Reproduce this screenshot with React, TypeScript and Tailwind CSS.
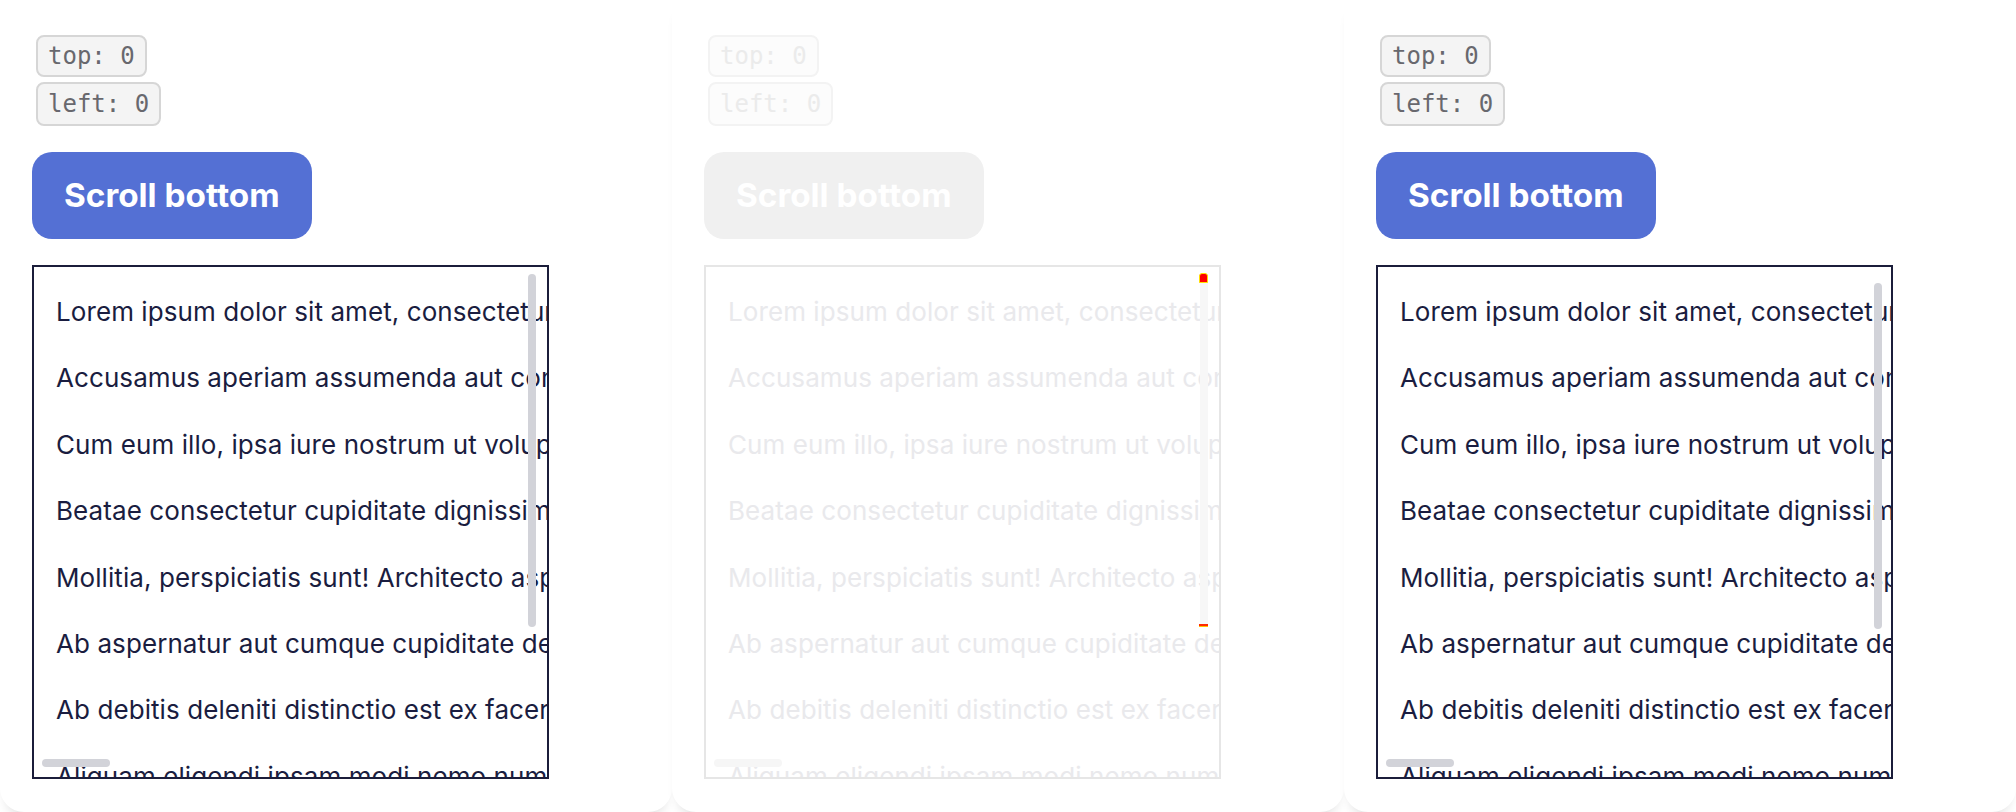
import React from "react";

const lines = [
  "Lorem ipsum dolor sit amet, consectetur adipisicing elit. Quisquam, voluptatum.",
  "Accusamus aperiam assumenda aut consequatur deserunt dolore eaque.",
  "Cum eum illo, ipsa iure nostrum ut voluptas voluptatem quae.",
  "Beatae consectetur cupiditate dignissimos doloremque eius est.",
  "Mollitia, perspiciatis sunt! Architecto aspernatur debitis dolorum.",
  "Ab aspernatur aut cumque cupiditate delectus deserunt dicta.",
  "Ab debitis deleniti distinctio est ex facere fugiat illum.",
  "Aliquam eligendi ipsam modi nemo numquam officiis quas.",
];

const sans = "font-['Inter','Noto_Sans',sans-serif]";

interface PanelProps {
  variant: "normal" | "faded" | "third";
}

const Panel = ({ variant }: PanelProps) => {
  const faded = variant === "faded";

  const badge = faded
    ? "bg-[#fcfcfc] border-[#f3f3f3] text-[#ebebeb]"
    : "bg-[#f4f4f4] border-[#d6d6d6] text-[#68686e]";
  const button = faded ? "bg-[#f0f0f0] text-white" : "bg-[#5470d4] text-white";
  const box = faded ? "border-[#e6e6e6]" : "border-[#1b1d3a]";
  const text = faded ? "text-[#e9e9ec]" : "text-[#1a1d40]";
  const thumb = faded ? "bg-[#f7f7f7]" : "bg-[#d2d3d9]";
  const hThumb = faded ? "bg-[#f6f6f6]" : "bg-[#d2d3d9]";
  const vThumbPos =
    variant === "third"
      ? "top-[16px] h-[346px] right-[9px]"
      : "top-[7px] h-[353px] right-[11px]";

  return (
    <div className="w-[672px] h-[812px] shrink-0 bg-white rounded-b-[24px] shadow-[0_10px_12px_-7px_rgba(0,0,0,0.14)] px-[32px] pt-[35px]">
      <div className="flex flex-col items-start gap-[5px] ml-[4px] font-['DejaVu_Sans_Mono',monospace]">
        <span className={`h-[42px] flex items-center px-[10px] border-2 rounded-[8px] text-[24px] ${badge}`}>
          top: 0
        </span>
        <span className={`h-[44px] flex items-center px-[10px] border-2 rounded-[8px] text-[24px] ${badge}`}>
          left: 0
        </span>
      </div>

      <button
        className={`mt-[26px] h-[87px] px-[32px] rounded-[20px] text-[33.3px] font-bold ${sans} ${button}`}
      >
        Scroll bottom
      </button>

      <div className={`relative mt-[26px] w-[517px] h-[514px] border-2 overflow-hidden ${box}`}>
        <div className={`px-[22px] pt-[24px] ${sans} ${text}`}>
          {lines.map((line) => (
            <p
              key={line}
              className="whitespace-nowrap text-[26px] tracking-[0.08px] leading-[42px] mb-[24.4px]"
            >
              {line}
            </p>
          ))}
        </div>

        <div className={`absolute w-[8px] rounded-full ${vThumbPos} ${thumb}`} />
        <div className={`absolute left-[8px] bottom-[10px] w-[68px] h-[8px] rounded-full ${hThumb}`} />

        {faded && (
          <>
            <div className="absolute right-[11px] top-[6px] w-[9px] h-[10px] bg-[#ff0000] border border-[#ffe100] rounded-t-[3px]" />
            <div className="absolute right-[11px] top-[357px] w-[9px] h-[3px] bg-[#ff2a00] border-b border-[#ffc400]" />
          </>
        )}
      </div>
    </div>
  );
};

export default function App() {
  return (
    <div className="flex w-[2016px] h-[812px] overflow-hidden bg-white">
      <Panel variant="normal" />
      <Panel variant="faded" />
      <Panel variant="third" />
    </div>
  );
}
